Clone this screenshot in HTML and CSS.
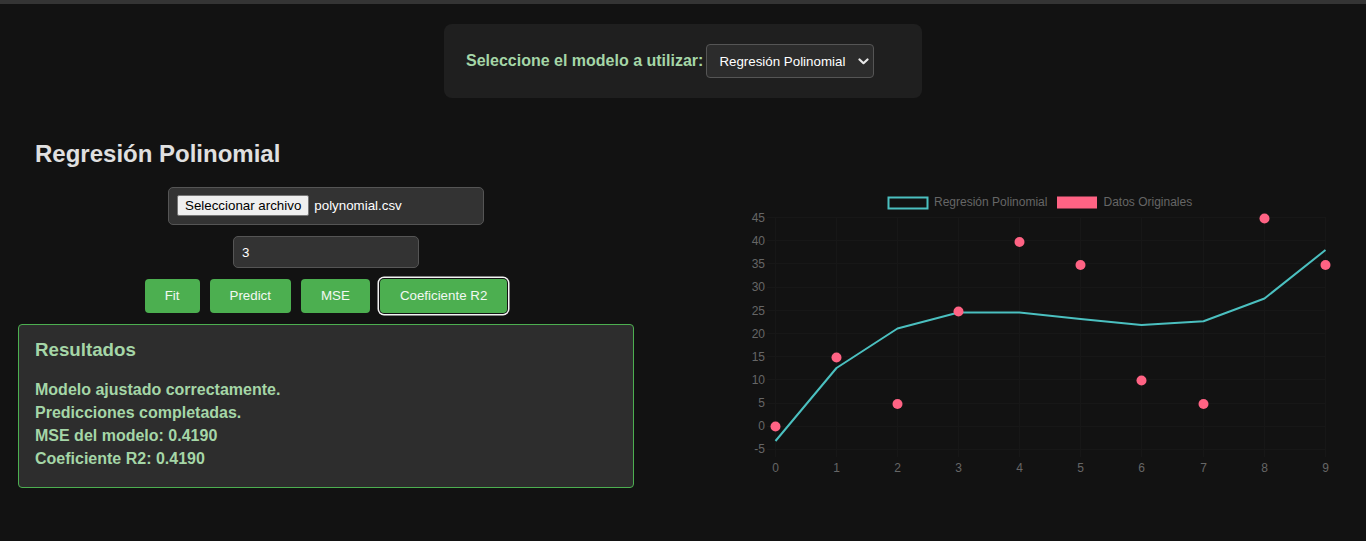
FILE: index.html
```html
<!DOCTYPE html>
<html lang="es">
<head>
<meta charset="utf-8">
<title>Regresión Polinomial</title>
<link rel="stylesheet" href="styles.css">
</head>
<body>
<div class="topbar"></div>
<header class="selector-card">
  <label class="selector-label" for="model">Seleccione el modelo a utilizar:</label>
  <div class="select-wrap">
    <select id="model" class="model-select">
      <option>Regresión Polinomial</option>
    </select>
    <svg class="chevron" width="11" height="7" viewBox="0 0 11 7"><path d="M1.5 1.5 L5.5 5.2 L9.5 1.5" fill="none" stroke="#e8e8e8" stroke-width="2.2" stroke-linecap="round" stroke-linejoin="round"/></svg>
  </div>
</header>
<main class="layout">
  <section class="left">
    <h2 class="title">Regresión Polinomial</h2>
    <div class="controls">
      <div class="file-box">
        <span class="file-btn">Seleccionar archivo</span>
        <span class="file-name">polynomial.csv</span>
      </div>
      <input class="degree" type="text" value="3">
      <div class="buttons">
        <button class="btn">Fit</button>
        <button class="btn">Predict</button>
        <button class="btn">MSE</button>
        <button class="btn btn-focus">Coeficiente R2</button>
      </div>
    </div>
    <div class="results">
      <h3 class="results-title">Resultados</h3>
      <p class="results-line">Modelo ajustado correctamente.</p>
      <p class="results-line">Predicciones completadas.</p>
      <p class="results-line">MSE del modelo: 0.4190</p>
      <p class="results-line">Coeficiente R2: 0.4190</p>
    </div>
  </section>
  <section class="right">
    <svg class="chart" width="700" height="310" viewBox="650 180 700 310">
      <g class="grid" stroke="#171717" stroke-width="1">
        <line x1="775.5" y1="217" x2="775.5" y2="457"/>
        <line x1="836.5" y1="217" x2="836.5" y2="457"/>
        <line x1="897.5" y1="217" x2="897.5" y2="457"/>
        <line x1="958.5" y1="217" x2="958.5" y2="457"/>
        <line x1="1019.5" y1="217" x2="1019.5" y2="457"/>
        <line x1="1080.5" y1="217" x2="1080.5" y2="457"/>
        <line x1="1141.5" y1="217" x2="1141.5" y2="457"/>
        <line x1="1203.5" y1="217" x2="1203.5" y2="457"/>
        <line x1="1264.5" y1="217" x2="1264.5" y2="457"/>
        <line x1="1325.5" y1="217" x2="1325.5" y2="457"/>
        <line x1="767" y1="217.5" x2="1326" y2="217.5"/>
        <line x1="767" y1="240.5" x2="1326" y2="240.5"/>
        <line x1="767" y1="263.5" x2="1326" y2="263.5"/>
        <line x1="767" y1="287.5" x2="1326" y2="287.5"/>
        <line x1="767" y1="310.5" x2="1326" y2="310.5"/>
        <line x1="767" y1="333.5" x2="1326" y2="333.5"/>
        <line x1="767" y1="356.5" x2="1326" y2="356.5"/>
        <line x1="767" y1="379.5" x2="1326" y2="379.5"/>
        <line x1="767" y1="403.5" x2="1326" y2="403.5"/>
        <line x1="767" y1="426.5" x2="1326" y2="426.5"/>
        <line x1="767" y1="449.5" x2="1326" y2="449.5"/>
      </g>
      <g class="axis-y" fill="#666" font-size="12" text-anchor="end">
        <text x="765" y="221.5">45</text>
        <text x="765" y="244.5">40</text>
        <text x="765" y="267.5">35</text>
        <text x="765" y="291">30</text>
        <text x="765" y="314.5">25</text>
        <text x="765" y="337.5">20</text>
        <text x="765" y="360.5">15</text>
        <text x="765" y="383.5">10</text>
        <text x="765" y="407">5</text>
        <text x="765" y="430">0</text>
        <text x="765" y="453">-5</text>
      </g>
      <g class="axis-x" fill="#666" font-size="12" text-anchor="middle">
        <text x="775.5" y="471.5">0</text>
        <text x="836.5" y="471.5">1</text>
        <text x="897.5" y="471.5">2</text>
        <text x="958.5" y="471.5">3</text>
        <text x="1019.5" y="471.5">4</text>
        <text x="1080.5" y="471.5">5</text>
        <text x="1141.5" y="471.5">6</text>
        <text x="1203.5" y="471.5">7</text>
        <text x="1264.5" y="471.5">8</text>
        <text x="1325.5" y="471.5">9</text>
      </g>
      <g class="legend" font-size="12" fill="#666">
        <rect x="888.5" y="197.5" width="39" height="11" fill="none" stroke="#4bc0c0" stroke-width="2"/>
        <text x="934" y="206">Regresión Polinomial</text>
        <rect x="1057" y="196.5" width="40" height="12" fill="#ff6384"/>
        <text x="1103.5" y="206">Datos Originales</text>
      </g>
      <polyline fill="none" stroke="#4bc0c0" stroke-width="2" stroke-linejoin="round"
        points="775.5,441 836.5,368 897.5,328.5 958.5,312.5 1019.5,312.5 1080.5,319 1141.5,325 1203.5,321.3 1264.5,298.5 1325.5,250"/>
      <g class="points" fill="#ff6384">
        <circle cx="775.5" cy="426.5" r="5"/>
        <circle cx="836.5" cy="357.5" r="5"/>
        <circle cx="897.5" cy="404" r="5"/>
        <circle cx="958.5" cy="311.5" r="5"/>
        <circle cx="1019.5" cy="242" r="5"/>
        <circle cx="1080.5" cy="265" r="5"/>
        <circle cx="1141.5" cy="380.5" r="5"/>
        <circle cx="1203.5" cy="404" r="5"/>
        <circle cx="1264.5" cy="218.5" r="5"/>
        <circle cx="1325.5" cy="265" r="5"/>
      </g>
    </svg>
  </section>
</main>
</body>
</html>
```
FILE: styles.css
```css
* {
  box-sizing: border-box;
}

html, body {
  margin: 0;
  padding: 0;
  background: #121212;
  font-family: "Liberation Sans", Arial, sans-serif;
  height: 100%;
  overflow: hidden;
}

.topbar {
  height: 4px;
  background: #343434;
}

.selector-card {
  width: 478px;
  height: 74px;
  margin: 20px auto 0;
  padding: 0 22px;
  background: #1f1f1f;
  border-radius: 8px;
  display: flex;
  align-items: center;
  gap: 3px;
}

.selector-label {
  color: #a5d6a7;
  font-weight: bold;
  font-size: 16px;
}

.select-wrap {
  position: relative;
  display: flex;
}

.model-select {
  appearance: none;
  -webkit-appearance: none;
  width: 168px;
  height: 34px;
  padding: 0 0 0 12px;
  background: #2c2c2c;
  color: #fff;
  border: 1px solid #555;
  border-radius: 4px;
  font-family: "Liberation Sans", Arial, sans-serif;
  font-size: 13.33px;
}

.chevron {
  position: absolute;
  right: 5px;
  top: 14px;
  pointer-events: none;
}

.layout {
  display: flex;
  align-items: flex-start;
  gap: 16px;
  padding: 0 18px;
  margin-top: 20px;
}

.left {
  width: 616px;
  flex: none;
}

.title {
  margin: 22px 0 19px 17px;
  font-size: 24px;
  font-weight: bold;
  color: #e0e0e0;
  line-height: 27.6px;
}

.controls {
  display: flex;
  flex-direction: column;
  align-items: center;
  gap: 11px;
  margin-bottom: 11px;
}

.file-box {
  width: 316px;
  height: 38px;
  padding: 0 8px;
  background: #333;
  border: 1px solid #555;
  border-radius: 5px;
  display: flex;
  align-items: center;
  gap: 5px;
  font-size: 13.33px;
}

.file-btn {
  height: 21px;
  padding: 0 7px;
  display: flex;
  align-items: center;
  background: #efefef;
  border: 1px solid #767676;
  border-radius: 2px;
  color: #000;
}

.file-name {
  color: #fff;
}

.degree {
  width: 186px;
  height: 32px;
  padding: 1px 8px 0;
  background: #333;
  border: 1px solid #555;
  border-radius: 5px;
  color: #fff;
  font-family: "Liberation Sans", Arial, sans-serif;
  font-size: 13.33px;
}

.buttons {
  display: flex;
  gap: 10px;
}

.btn {
  height: 34px;
  padding: 0 20px;
  background: #4caf50;
  color: #f2f8f2;
  border: none;
  border-radius: 4px;
  font-family: "Liberation Sans", Arial, sans-serif;
  font-size: 13.33px;
}

.btn-focus {
  box-shadow: 0 0 0 1px #121212, 0 0 0 2.5px #f4f4f4;
}

.results {
  width: 616px;
  padding: 14px 16px 17px;
  background: #2d2d2d;
  border: 1px solid #4caf50;
  border-radius: 4px;
}

.results-title {
  margin: 0 0 18px;
  font-size: 18.72px;
  font-weight: bold;
  color: #a5d6a7;
  line-height: 21.5px;
}

.results-line {
  margin: 0;
  font-size: 16px;
  font-weight: bold;
  color: #a5d6a7;
  line-height: 23px;
}

.right {
  flex: none;
  width: 700px;
}

.chart {
  display: block;
  margin-top: 62px;
  font-family: "Liberation Sans", Arial, sans-serif;
}
```
